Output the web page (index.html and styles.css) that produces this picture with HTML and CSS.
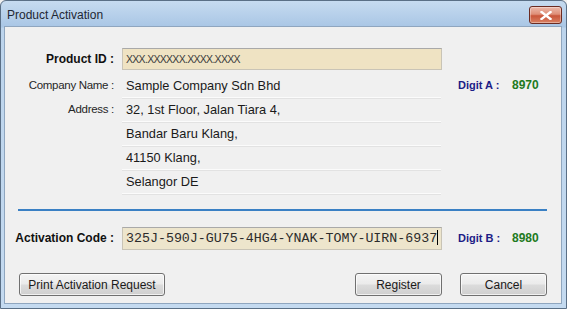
FILE: index.html
```html
<!DOCTYPE html>
<html lang="en">
  <head>
    <meta charset="UTF-8" />
    <meta name="viewport" content="width=device-width, initial-scale=1.0" />
    <title>Product Activation</title>
    <link rel="stylesheet" href="styles.css">
  </head>
  <body>
    <div class="window">
      <div class="titlebar">
        <span class="title">Product Activation</span>
        <button class="close-btn" aria-label="Close">
          <svg width="12" height="9" viewBox="0 0 12 9">
            <path d="M1.5 1 L10.5 8 M10.5 1 L1.5 8" stroke="#fff" stroke-width="2.4" stroke-linecap="square" />
          </svg>
        </button>
      </div>

      <div class="client">
        <div class="form">
          <label class="label bold">Product ID :</label>
          <div class="input product-id">XXX.XXXXXX.XXXX.XXXX</div>
          <div></div>

          <label class="label">Company Name :</label>
          <div class="value">Sample Company Sdn Bhd</div>
          <div class="digit"><span class="digit-label">Digit A :</span><span class="digit-value">8970</span></div>

          <label class="label">Address :</label>
          <div class="value">32, 1st Floor, Jalan Tiara 4,</div>
          <div></div>

          <div></div>
          <div class="value">Bandar Baru Klang,</div>
          <div></div>

          <div></div>
          <div class="value">41150 Klang,</div>
          <div></div>

          <div></div>
          <div class="value">Selangor DE</div>
          <div></div>
        </div>

        <div class="divider"></div>

        <div class="form activation">
          <label class="label bold">Activation Code :</label>
          <div class="input code">325J-590J-GU75-4HG4-YNAK-TOMY-UIRN-6937<span class="caret"></span></div>
          <div class="digit"><span class="digit-label">Digit B :</span><span class="digit-value">8980</span></div>
        </div>

        <div class="buttons">
          <button class="btn wide">Print Activation Request</button>
          <div class="spacer"></div>
          <button class="btn">Register</button>
          <button class="btn">Cancel</button>
        </div>
      </div>
    </div>
  </body>
</html>
```

FILE: styles.css
```css
body {
  margin: 0;
  padding: 0;
  font-family: "Liberation Sans", Arial, sans-serif;
  font-size: 12px;
  color: #1a1a1a;
  background-color: #f0f0f0;
}

.window {
  width: 567px;
  height: 309px;
  box-sizing: border-box;
  border: 1px solid #5a6f86;
  border-radius: 6px 6px 0 0;
  background: linear-gradient(to bottom, #c6dbf0 0, #a9c6e5 26px, #bcd4ec 27px, #c4daf0 100%);
  padding: 0 4px 4px 3px;
  display: flex;
  flex-direction: column;
  overflow: hidden;
}

.titlebar {
  height: 25px;
  display: flex;
  align-items: center;
  justify-content: space-between;
  padding: 0 0 0 3px;
}

.title {
  font-size: 12px;
  color: #1e2733;
  margin-top: 2px;
}

.close-btn {
  width: 33px;
  height: 18px;
  margin-top: 3px;
  border: 1px solid #6b2b22;
  border-radius: 3px;
  background: linear-gradient(to bottom, #ecb9ab 0%, #df8f78 45%, #c9553a 55%, #d98163 100%);
  display: flex;
  align-items: center;
  justify-content: center;
  padding: 0;
  box-shadow: inset 0 0 0 1px rgba(255, 255, 255, 0.35);
}

.client {
  flex: 1;
  background-color: #f0f0f0;
  border: 1px solid #8fa6bf;
  padding: 21px 0 0 0;
}

.form {
  display: grid;
  grid-template-columns: 109px 320px 1fr;
  column-gap: 8px;
  grid-template-rows: 26px;
  grid-auto-rows: 24px;
}

.label {
  text-align: right;
  line-height: 23px;
  font-size: 11.5px;
  letter-spacing: -0.3px;
  white-space: nowrap;
  color: #262626;
}

.label.bold {
  font-size: 12px;
  letter-spacing: 0;
  font-weight: bold;
  color: #111;
  line-height: 22px;
}

.value {
  font-size: 12.8px;
  border-bottom: 1px solid #fbfbfb;
  box-shadow: 0 1px 0 #e2e2e2;
  line-height: 23px;
  padding-left: 4px;
  margin-right: 1px;
}

.input {
  height: 22px;
  box-sizing: border-box;
  background-color: #efe3c3;
  border: 1px solid #c9c4b6;
  border-top-color: #a9a9a9;
  line-height: 20px;
  padding-left: 3px;
  color: #333;
}

.product-id {
  font-size: 10.5px;
  letter-spacing: -0.7px;
  color: #3c3c3c;
}

.digit {
  padding-left: 8px;
  line-height: 23px;
  font-weight: bold;
  white-space: nowrap;
}

.digit-label {
  color: #1c1c86;
  font-size: 11px;
  display: inline-block;
  width: 54px;
}

.digit-value {
  color: #217a21;
}

.divider {
  height: 2px;
  background-color: #3a80c4;
  margin: 15px 14px 16px 13px;
}

.activation {
  grid-template-rows: 23px;
}

.activation .label {
  line-height: 23px;
}

.code {
  height: 23px;
  font-family: "Liberation Mono", "Courier New", monospace;
  font-size: 13.3px;
  line-height: 21px;
  color: #2b2b2b;
  background-color: #ede5cc;
  white-space: nowrap;
}

.caret {
  display: inline-block;
  width: 1px;
  height: 15px;
  background-color: #000;
  vertical-align: -3px;
}

.buttons {
  display: flex;
  gap: 18px;
  padding: 23px 14px 0 14px;
}

.spacer {
  flex: 1;
}

.btn {
  width: 87px;
  height: 23px;
  font-family: "Liberation Sans", Arial, sans-serif;
  font-size: 12px;
  color: #1a1a1a;
  border: 1px solid #707070;
  border-radius: 3px;
  background: linear-gradient(to bottom, #f4f4f4 0%, #ebebeb 48%, #dcdcdc 52%, #cfcfcf 100%);
  box-shadow: inset 0 0 0 1px rgba(255, 255, 255, 0.7);
  padding: 0;
}

.btn.wide {
  width: 146px;
}
```
